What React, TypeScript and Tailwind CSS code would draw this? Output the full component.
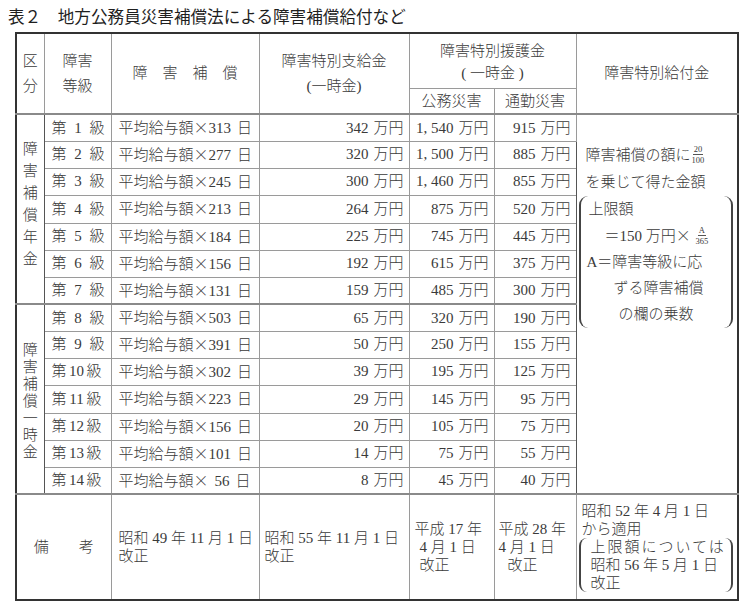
import React from "react";

const g1 = [
  ["1", "313", "342", "1,540", "915"],
  ["2", "277", "320", "1,500", "885"],
  ["3", "245", "300", "1,460", "855"],
  ["4", "213", "264", "875", "520"],
  ["5", "184", "225", "745", "445"],
  ["6", "156", "192", "615", "375"],
  ["7", "131", "159", "485", "300"],
];
const g2 = [
  ["8", "503", "65", "320", "190"],
  ["9", "391", "50", "250", "155"],
  ["10", "302", "39", "195", "125"],
  ["11", "223", "29", "145", "95"],
  ["12", "156", "20", "105", "75"],
  ["13", "101", "14", "75", "55"],
  ["14", "56", "8", "45", "40"],
];
const heights = [27, 27, 27, 28, 27, 27, 27];

const cell = "border border-[#9a9a9a] p-0";

function Frac({ n, d }: { n: string; d: string }) {
  return (
    <span className="inline-flex flex-col items-center align-middle leading-none text-[8.5px] mx-[1px] relative top-[-2px]">
      <span className="border-b border-[#555] px-[1px] pb-[1px]">{n}</span>
      <span className="pt-[1px]">{d}</span>
    </span>
  );
}

function Grade({ g }: { g: string }) {
  const two = g.length > 1;
  return (
    <div className={two ? "flex justify-between pl-[7px] pr-[9px]" : "flex justify-between pl-[7px] pr-[6px]"}>
      <span>第</span>
      <span className={two ? "px-[2px]" : ""}>{g}</span>
      <span>級</span>
    </div>
  );
}

function Days({ d }: { d: string }) {
  return (
    <div className="pl-[7px] whitespace-pre">
      平均給与額<span className="font-['Noto_Sans_CJK_JP',sans-serif]">×</span>
      {d.length < 3 ? <span className="inline-block w-[6px]" /> : null}
      {d}
      <span className="inline-block w-[6px]" />日
    </div>
  );
}

function Amount({ v }: { v: string }) {
  return (
    <div className="text-right pr-[5px] whitespace-pre">
      {v.replace(",", ", ")}
      <span className="inline-block w-[5px]" />万円
    </div>
  );
}

export default function App() {
  return (
    <div className="w-[750px] h-[615px] bg-white overflow-hidden">
      <div className="pl-[8px] pt-[6px] leading-[20px] text-[16.6px] text-[#1e1e1e] font-['Noto_Sans_CJK_JP',sans-serif] whitespace-pre">
        表２　地方公務員災害補償法による障害補償給付など
      </div>
      <table className="ml-[15px] mt-[6px] w-[722px] table-fixed border-collapse border-2 border-[#333] text-[15px] text-[#3a3a3a] font-['Liberation_Serif','Noto_Sans_CJK_JP',serif] font-light">
        <colgroup>
          <col className="w-[28px]" />
          <col className="w-[67px]" />
          <col className="w-[148px]" />
          <col className="w-[150px]" />
          <col className="w-[85px]" />
          <col className="w-[82px]" />
          <col className="w-[162px]" />
        </colgroup>
        <tbody>
          <tr className="h-[55px]">
            <td rowSpan={2} className={cell + " text-center leading-[25px]"}>
              区<br />分
            </td>
            <td rowSpan={2} className={cell + " text-center leading-[25px]"}>
              障害<br />等級
            </td>
            <td rowSpan={2} className={cell + " text-center whitespace-pre"}>
              障　害　補　償
            </td>
            <td rowSpan={2} className={cell + " text-center leading-[25px]"}>
              障害特別支給金<br />(一時金)
            </td>
            <td colSpan={2} className={cell + " text-center leading-[22px] pt-[2px]"}>
              障害特別援護金<br />
              <span className="whitespace-pre">( 一時金 )</span>
            </td>
            <td rowSpan={2} className={cell + " text-center"}>
              障害特別給付金
            </td>
          </tr>
          <tr className="h-[26px]">
            <td className={cell + " text-center"}>公務災害</td>
            <td className={cell + " text-center"}>通勤災害</td>
          </tr>
          {g1.map((r, i) => (
            <tr key={"a" + i} style={{ height: heights[i] }} className={i === 0 ? "border-t-2 border-[#8a8a8a]" : ""}>
              {i === 0 && (
                <td rowSpan={7} className={cell + " border-r-[#555] text-center leading-[22px]"}>
                  <div className="flex flex-col items-center pb-[10px]">
                    {"障害補償年金".split("").map((c) => (
                      <span key={c}>{c}</span>
                    ))}
                  </div>
                </td>
              )}
              <td className={cell}>
                <Grade g={r[0]} />
              </td>
              <td className={cell}>
                <Days d={r[1]} />
              </td>
              <td className={cell}>
                <Amount v={r[2]} />
              </td>
              <td className={cell}>
                <Amount v={r[3]} />
              </td>
              <td className={cell}>
                <Amount v={r[4]} />
              </td>
              {i === 0 && (
                <td rowSpan={14} className={cell + " align-top border-l-[#555]"}>
                  <div className="pt-[27px] leading-[27px] whitespace-pre">
                    <div className="pl-[9px]">
                      障害補償の額に<Frac n="20" d="100" />
                    </div>
                    <div className="pl-[9px]">を乗じて得た金額</div>
                    <div className="ml-[2px] mr-[4px] border-x-2 border-[#444] rounded-[9px] pl-[8px] leading-[26px] pb-[1px]">
                      <div>上限額</div>
                      <div className="pl-[16px]">
                        ＝150 万円<span className="font-['Noto_Sans_CJK_JP',sans-serif]">×</span> <Frac n="A" d="365" />
                      </div>
                      <div className="-ml-[2px]">A＝障害等級に応</div>
                      <div className="pl-[25px]">ずる障害補償</div>
                      <div className="pl-[30px]">の欄の乗数</div>
                    </div>
                  </div>
                </td>
              )}
            </tr>
          ))}
          {g2.map((r, i) => (
            <tr key={"b" + i} style={{ height: heights[i] }} className={i === 0 ? "border-t-2 border-[#8a8a8a]" : ""}>
              {i === 0 && (
                <td rowSpan={7} className={cell + " border-r-[#555] text-center leading-[17px]"}>
                  <div className="flex flex-col items-center pt-[4px]">
                    {"障害補償一時金".split("").map((c, k) => (
                      <span key={k}>{c}</span>
                    ))}
                  </div>
                </td>
              )}
              <td className={cell}>
                <Grade g={r[0]} />
              </td>
              <td className={cell}>
                <Days d={r[1]} />
              </td>
              <td className={cell}>
                <Amount v={r[2]} />
              </td>
              <td className={cell}>
                <Amount v={r[3]} />
              </td>
              <td className={cell}>
                <Amount v={r[4]} />
              </td>
            </tr>
          ))}
          <tr className="h-[106px] border-t-2 border-[#8a8a8a]">
            <td colSpan={2} className={cell + " text-center whitespace-pre"}>
              備　　考
            </td>
            <td className={cell + " leading-[18px] pl-[7px] whitespace-pre"}>
              昭和 49 年 11 月 1 日<br />改正
            </td>
            <td className={cell + " leading-[18px] pl-[5px] whitespace-pre"}>
              昭和 55 年 11 月 1 日<br />改正
            </td>
            <td className={cell + " leading-[18px] pl-[5px] whitespace-pre"}>
              平成 17 年<br />
              <span className="pl-[5px]">4 月 1 日</span>
              <br />
              <span className="pl-[5px]">改正</span>
            </td>
            <td className={cell + " leading-[18px] pl-[4px] whitespace-pre"}>
              平成 28 年<br />4 月 1 日<br />
              <span className="pl-[9px]">改正</span>
            </td>
            <td className={cell + " leading-[18px] whitespace-pre"}>
              <div className="pl-[5px]">昭和 52 年 4 月 1 日</div>
              <div className="pl-[5px]">から適用</div>
              <div className="ml-[2px] mr-[4px] border-x-2 border-[#444] rounded-[8px] pl-[10px]">
                <div className="tracking-[2px]">上限額については</div>
                <div>昭和 56 年 5 月 1 日</div>
                <div>改正</div>
              </div>
            </td>
          </tr>
        </tbody>
      </table>
    </div>
  );
}
